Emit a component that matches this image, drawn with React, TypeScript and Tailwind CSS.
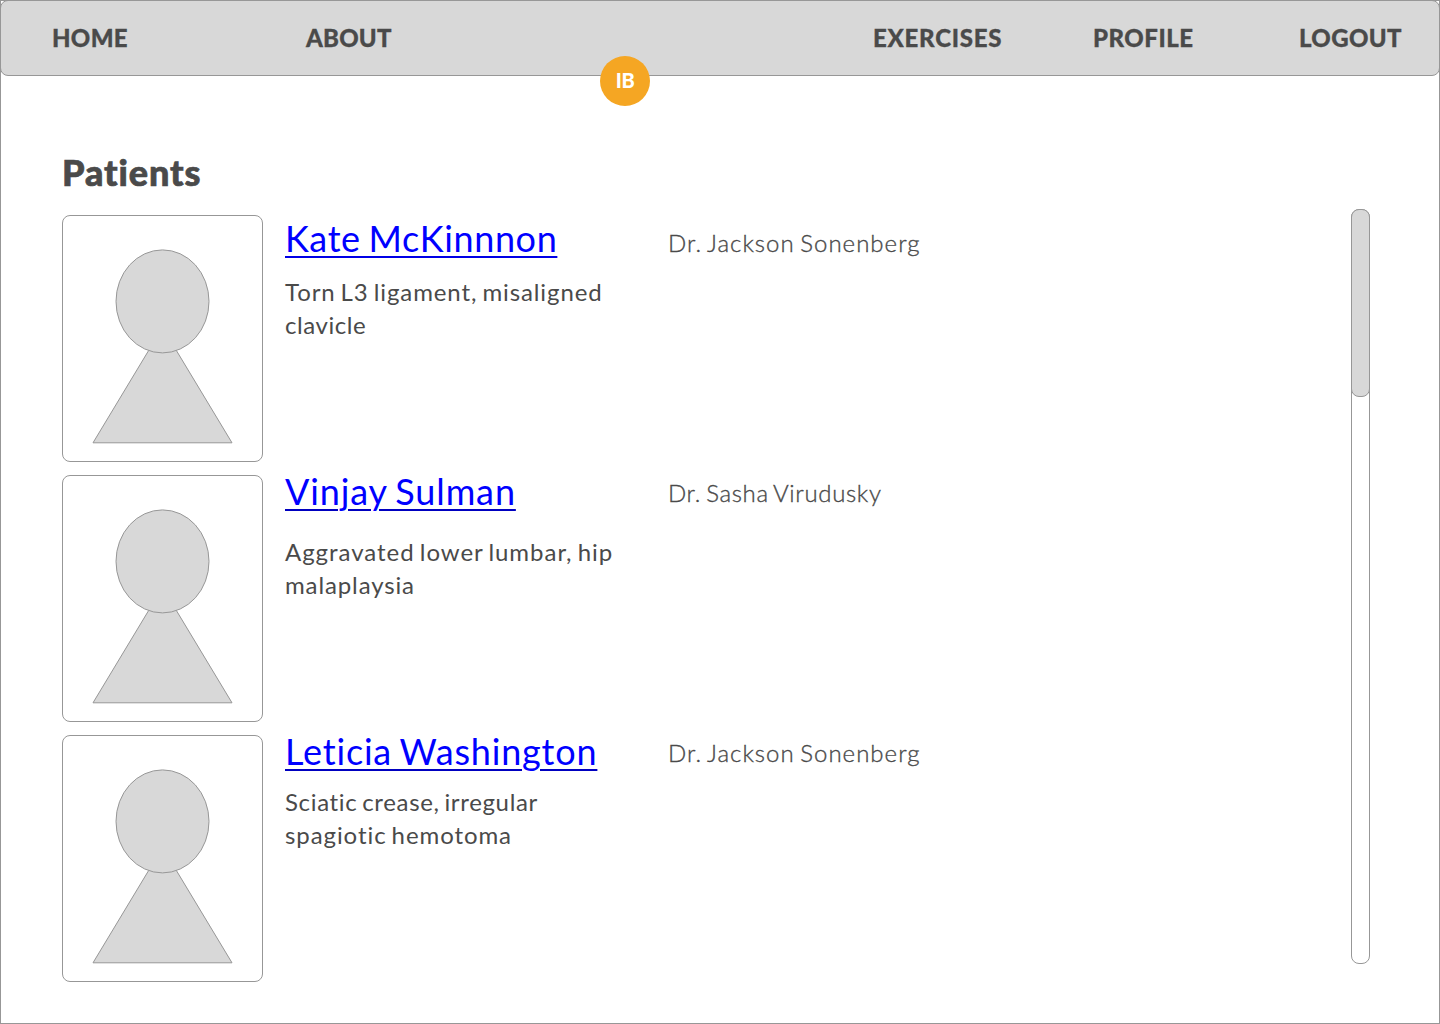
type Line = { text: string; spacing: string };

type Patient = {
  name: string;
  nameClass: string;
  lines: Line[];
  linesClass: string;
  doctor: string;
  doctorClass: string;
};

const patients: Patient[] = [
  {
    name: "Kate McKinnnon",
    nameClass: "mt-px w-[272px] tracking-[0.63px] decoration-[#0000e6]",
    lines: [
      { text: "Torn L3 ligament, misaligned", spacing: "tracking-[0.9px]" },
      { text: "clavicle", spacing: "tracking-[0.55px]" },
    ],
    linesClass: "mt-[15px]",
    doctor: "Dr. Jackson Sonenberg",
    doctorClass: "pt-[11px] tracking-[1.02px]",
  },
  {
    name: "Vinjay Sulman",
    nameClass: "-mt-1.5 w-[231px] tracking-[0.88px] decoration-[#0000c0]",
    lines: [
      { text: "Aggravated lower lumbar, hip", spacing: "tracking-[0.97px]" },
      { text: "malaplaysia", spacing: "tracking-[0.88px]" },
    ],
    linesClass: "mt-[22px]",
    doctor: "Dr. Sasha Virudusky",
    doctorClass: "pt-px tracking-[0.64px]",
  },
  {
    name: "Leticia Washington",
    nameClass: "-mt-1.5 w-[312px] tracking-[0.82px] decoration-[#0000c0]",
    lines: [
      { text: "Sciatic crease, irregular", spacing: "tracking-[0.66px]" },
      { text: "spagiotic hemotoma", spacing: "tracking-[0.92px]" },
    ],
    linesClass: "mt-3",
    doctor: "Dr. Jackson Sonenberg",
    doctorClass: "pt-px tracking-[1.02px]",
  },
];

function Avatar() {
  return (
    <div className="h-[247px] w-[201px] shrink-0 rounded-lg border border-[#979797]">
      <svg className="block" width="199" height="245" viewBox="0 0 199 245" fill="#d8d8d8" stroke="#979797">
        <path d="M99.5 111.5 L169 226.8 H30 Z" />
        <ellipse cx="99.5" cy="85.4" rx="46.5" ry="51.5" />
      </svg>
    </div>
  );
}

function PatientRow({ patient }: { patient: Patient }) {
  return (
    <article className="flex h-[247px] [word-spacing:-2px]">
      <Avatar />
      <div className="ml-[22px] w-[383px]">
        <a
          href="#"
          className={`block h-11 whitespace-nowrap text-4xl leading-[44px] text-[#0000ff] underline decoration-2 underline-offset-[4px] ${patient.nameClass}`}
        >
          {patient.name}
        </a>
        <div className={`text-2xl leading-[33px] ${patient.linesClass}`}>
          {patient.lines.map((line) => (
            <p key={line.text} className={`whitespace-nowrap ${line.spacing}`}>
              {line.text}
            </p>
          ))}
        </div>
      </div>
      <p
        className={`whitespace-nowrap text-2xl font-light leading-[33px] [-webkit-text-stroke:0.35px_#4a4a4a] ${patient.doctorClass}`}
      >
        {patient.doctor}
      </p>
    </article>
  );
}

export default function App() {
  return (
    <div className="h-[1024px] w-[1440px] overflow-hidden border border-[#979797] bg-white font-['Lato',sans-serif] text-[#4a4a4a]">
      <header className="relative -mx-px -mt-px h-[76px] rounded-lg border border-[#979797] bg-[#d8d8d8]">
        <nav className="flex pt-5 pl-[51px] text-2xl font-black leading-[33px] [-webkit-text-stroke:0.3px_#4a4a4a]">
          <a href="#" className="w-[254px] tracking-[0.3px]">HOME</a>
          <a href="#" className="w-[567px] tracking-[0.2px]">ABOUT</a>
          <a href="#" className="w-[220px] tracking-[0.75px]">EXERCISES</a>
          <a href="#" className="w-[206px] tracking-[0.5px]">PROFILE</a>
          <a href="#" className="tracking-[0.35px]">LOGOUT</a>
        </nav>
        <div className="absolute top-[55px] left-[599px] flex size-[50px] items-center justify-center rounded-full bg-[#f5a623] pb-0.5 text-xl font-black leading-[48px] tracking-[-0.4px] text-white">
          IB
        </div>
      </header>
      <div className="flex justify-between pr-[69px] pl-[61px]">
        <main className="pt-[72px]">
          <h1 className="h-[67px] text-4xl font-black leading-[49px] tracking-[0.9px] [-webkit-text-stroke:0.7px_#4a4a4a]">Patients</h1>
          <div className="flex flex-col gap-[13px]">
            {patients.map((patient) => (
              <PatientRow key={patient.name} patient={patient} />
            ))}
          </div>
        </main>
        <div className="mt-[133px] h-[755px] w-[19px] rounded-lg border border-[#979797]">
          <div className="-mx-px -mt-px h-[188px] rounded-lg border border-[#979797] bg-[#d8d8d8]" />
        </div>
      </div>
    </div>
  );
}
